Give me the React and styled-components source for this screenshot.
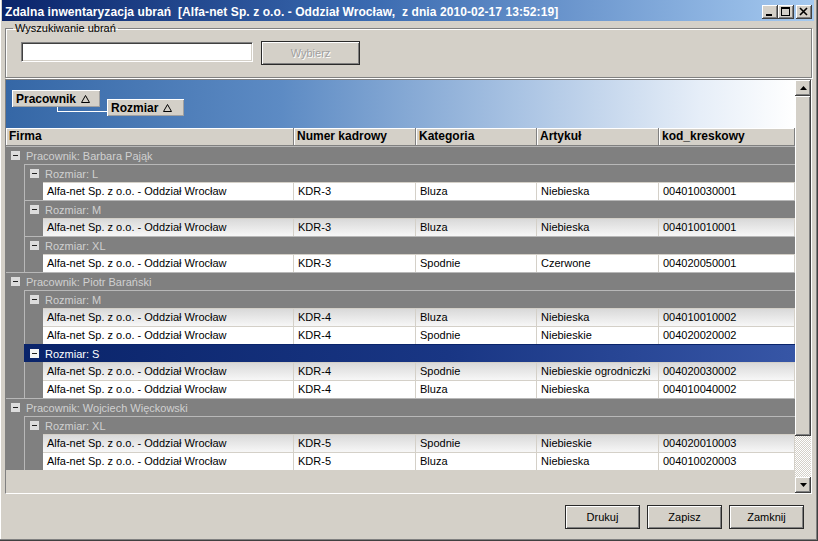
import styled, { createGlobalStyle } from "styled-components";

const GlobalStyle = createGlobalStyle`
  html, body {
    margin: 0;
    padding: 0;
    background: #d4d0c8;
  }
  body {
    font-family: "Liberation Sans", Arial, sans-serif;
    font-size: 11px;
    color: #000;
  }
  * {
    box-sizing: border-box;
  }
`;

const Window = styled.div`
  width: 818px;
  height: 541px;
  display: flex;
  flex-direction: column;
  background: #d4d0c8;
  border-right: 1px solid #404040;
  border-bottom: 1px solid #404040;
  box-shadow: inset -1px -1px 0 #808080, inset 1px 0 0 #ffffff;
  padding: 0 3px 0 2px;
`;

const TitleBar = styled.div`
  height: 21px;
  padding: 3px 2px 0 3px;
  display: flex;
  align-items: center;
  background: linear-gradient(to right, #0a246a 0%, #3a6ab0 45%, #a6caf0 100%);
`;

const TitleText = styled.div`
  flex: 1;
  color: #fff;
  font-weight: bold;
  font-size: 12px;
  letter-spacing: 0.08px;
  white-space: pre;
`;

const TitleButtons = styled.div`
  display: flex;
`;

const TitleButton = styled.div`
  width: 16px;
  height: 14px;
  margin-left: ${(p) => (p.gap ? "2px" : "0")};
  background: #d4d0c8;
  box-shadow: inset -1px -1px 0 #404040, inset 1px 1px 0 #ffffff,
    inset -2px -2px 0 #808080;
  display: flex;
  align-items: center;
  justify-content: center;
`;

const Body = styled.div`
  flex: 1;
  display: flex;
  flex-direction: column;
  padding: 0 2px 0 3px;
`;

const GroupBox = styled.fieldset`
  margin: 1px 0 0;
  padding: 7px 0 0 7px;
  height: 56px;
  border: 1px solid #808080;
  box-shadow: inset 1px 1px 0 #ffffff, 1px 1px 0 #ffffff;
  display: flex;
  align-items: flex-start;
  gap: 8px;
`;

const Legend = styled.legend`
  padding: 0 2px;
  font-size: 11px;
  line-height: 12px;
`;

const SearchInput = styled.input`
  width: 232px;
  height: 20px;
  margin: 1px 0 0 8px;
  background: #fff;
  border: 1px solid;
  border-color: #808080 #ffffff #ffffff #808080;
  box-shadow: inset 1px 1px 0 #404040, inset -1px -1px 0 #d4d0c8;
  font-family: inherit;
  font-size: 11px;
  outline: none;
`;

const Button = styled.button`
  width: ${(p) => p.width || 75}px;
  height: 24px;
  padding: 0;
  background: #d4d0c8;
  border: 1px solid #2a2a2a;
  box-shadow: inset 1px 1px 0 #ffffff, inset -1px -1px 0 #808080;
  font-family: inherit;
  font-size: 11px;
  color: ${(p) => (p.disabled ? "#a0a0a0" : "#000")};
  text-shadow: ${(p) => (p.disabled ? "1px 1px 0 #fff" : "none")};
`;

const GridFrame = styled.div`
  margin-top: 1px;
  height: 415px;
  border: 1px solid;
  border-color: #808080 #ffffff #ffffff #808080;
  display: flex;
`;

const GridMain = styled.div`
  flex: 1;
  display: flex;
  flex-direction: column;
  min-width: 0;
`;

const GroupPanel = styled.div`
  height: 48px;
  padding: 10px 0 0 6px;
  display: flex;
  align-items: flex-start;
  background: linear-gradient(
    to right,
    #3567a6 0%,
    #5d8bc4 35%,
    #a9c3e3 65%,
    #e6eef8 88%,
    #ffffff 100%
  );
`;

const Chip = styled.div`
  position: relative;
  width: ${(p) => p.width}px;
  height: 17px;
  margin-left: ${(p) => (p.nested ? "7px" : "0")};
  margin-top: ${(p) => (p.nested ? "9px" : "0")};
  padding-left: 4px;
  display: flex;
  align-items: center;
  gap: 5px;
  background: #d4d0c8;
  box-shadow: inset 1px 1px 0 #ffffff, inset -1px -1px 0 #a0a0a0;
  font-weight: bold;
  font-size: 12px;

  &::before {
    content: "";
    display: ${(p) => (p.nested ? "block" : "none")};
    position: absolute;
    left: -50px;
    top: 8px;
    width: 50px;
    height: 4px;
    border-left: 1px solid #fff;
    border-bottom: 1px solid #fff;
  }
`;

const HeaderRow = styled.div`
  height: 18px;
  display: grid;
  grid-template-columns: 288px 122px 121px 122px 1fr;
  background: #d4d0c8;
`;

const HeaderCell = styled.div`
  padding-left: 3px;
  line-height: 17px;
  font-weight: bold;
  font-size: 12px;
  border-right: 1px solid #808080;
  border-bottom: 1px solid #808080;
  box-shadow: inset 1px 1px 0 #ffffff;
  white-space: nowrap;
  overflow: hidden;
`;

const Row = styled.div`
  height: 18px;
  display: flex;
  background: #808080;
`;

const Indent = styled.div`
  width: ${(p) => (p.line ? 19 : 18)}px;
  flex: none;
  border-right: ${(p) => (p.line ? "1px solid #b8b8b8" : "none")};
`;

const GroupHead = styled.div`
  flex: 1;
  display: flex;
  align-items: center;
  gap: 6px;
  padding-left: 5px;
  border-top: 1px solid ${(p) => (p.selected ? "#0a246a" : "#b8b8b8")};
  border-left: ${(p) =>
    p.level ? `1px solid ${p.selected ? "#0a246a" : "#b8b8b8"}` : "none"};
  background: ${(p) =>
    p.selected
      ? "linear-gradient(to right, #0a246a 0%, #193684 55%, #3756a6 100%)"
      : "#808080"};
  color: ${(p) => (p.selected ? "#ffffff" : "#d0d0d0")};
  white-space: nowrap;
`;

const ExpandBox = styled.div`
  width: 9px;
  height: 9px;
  flex: none;
  background: ${(p) => (p.selected ? "#f4f4f4" : "#dcdcdc")};
  display: flex;
  align-items: center;
  justify-content: center;

  &::after {
    content: "";
    width: 5px;
    height: 1px;
    background: #202020;
  }
`;

const DataRow = styled.div`
  flex: 1;
  display: grid;
  grid-template-columns: 251px 122px 121px 122px 1fr;
  border-top: 1px solid #d4d0c8;
  background: ${(p) =>
    p.shaded ? "linear-gradient(to bottom, #d9d9d9, #f7f7f7)" : "#ffffff"};
`;

const Cell = styled.div`
  padding-left: 4px;
  line-height: 16px;
  border-right: 1px solid #d4d0c8;
  white-space: nowrap;
  overflow: hidden;
`;

const Filler = styled.div`
  flex: 1;
  background: #d4d0c8;
`;

const ScrollBar = styled.div`
  width: 16px;
  display: flex;
  flex-direction: column;
  background: #d4d0c8;
`;

const ScrollButton = styled.div`
  height: 16px;
  flex: none;
  background: #d4d0c8;
  box-shadow: inset -1px -1px 0 #404040, inset 1px 1px 0 #ffffff,
    inset -2px -2px 0 #808080;
  display: flex;
  align-items: center;
  justify-content: center;
`;

const Thumb = styled.div`
  height: 340px;
  flex: none;
  background: #d4d0c8;
  box-shadow: inset -1px -1px 0 #404040, inset 1px 1px 0 #ffffff,
    inset -2px -2px 0 #808080;
`;

const Track = styled.div`
  flex: 1;
  background: repeating-conic-gradient(#ffffff 0 25%, #d4d0c8 0 50%) 0 0 /
    2px 2px;
`;

const Footer = styled.div`
  flex: 1;
  display: flex;
  justify-content: flex-end;
  align-items: flex-start;
  gap: 7px;
  padding: 11px 8px 0 0;
`;

const SortIcon = () => (
  <svg width="9" height="8" viewBox="0 0 9 8">
    <polygon points="4.5,0.5 8.5,7.5 0.5,7.5" fill="none" stroke="#000" />
  </svg>
);

const Arrow = ({ down }) => (
  <svg width="7" height="4" viewBox="0 0 7 4">
    <polygon points={down ? "0,0 7,0 3.5,4" : "3.5,0 7,4 0,4"} fill="#000" />
  </svg>
);

const columns = ["Firma", "Numer kadrowy", "Kategoria", "Artykuł", "kod_kreskowy"];
const firm = "Alfa-net Sp. z o.o. - Oddział Wrocław";

const groups = [
  {
    name: "Barbara Pająk",
    sizes: [
      { size: "L", items: [["KDR-3", "Bluza", "Niebieska", "004010030001"]] },
      { size: "M", items: [["KDR-3", "Bluza", "Niebieska", "004010010001"]] },
      { size: "XL", items: [["KDR-3", "Spodnie", "Czerwone", "004020050001"]] },
    ],
  },
  {
    name: "Piotr Barański",
    sizes: [
      {
        size: "M",
        items: [
          ["KDR-4", "Bluza", "Niebieska", "004010010002"],
          ["KDR-4", "Spodnie", "Niebieskie", "004020020002"],
        ],
      },
      {
        size: "S",
        selected: true,
        items: [
          ["KDR-4", "Spodnie", "Niebieskie ogrodniczki", "004020030002"],
          ["KDR-4", "Bluza", "Niebieska", "004010040002"],
        ],
      },
    ],
  },
  {
    name: "Wojciech Więckowski",
    sizes: [
      {
        size: "XL",
        items: [
          ["KDR-5", "Spodnie", "Niebieskie", "004020010003"],
          ["KDR-5", "Bluza", "Niebieska", "004010020003"],
        ],
      },
    ],
  },
];

const buildRows = () => {
  const rows = [];
  let n = 0;
  groups.forEach((g) => {
    rows.push(
      <Row key={`p-${g.name}`}>
        <GroupHead>
          <ExpandBox />
          Pracownik: {g.name}
        </GroupHead>
      </Row>
    );
    g.sizes.forEach((s) => {
      rows.push(
        <Row key={`s-${g.name}-${s.size}`}>
          <Indent />
          <GroupHead level={1} selected={s.selected}>
            <ExpandBox selected={s.selected} />
            Rozmiar: {s.size}
          </GroupHead>
        </Row>
      );
      s.items.forEach((it) => {
        const shaded = n % 2 === 1;
        n += 1;
        rows.push(
          <Row key={`d-${it[3]}`}>
            <Indent line />
            <Indent />
            <DataRow shaded={shaded}>
              <Cell>{firm}</Cell>
              {it.map((v, i) => (
                <Cell key={i}>{v}</Cell>
              ))}
            </DataRow>
          </Row>
        );
      });
    });
  });
  return rows;
};

export default function App() {
  return (
    <>
      <GlobalStyle />
      <Window>
        <TitleBar>
          <TitleText>
            {"Zdalna inwentaryzacja ubrań  [Alfa-net Sp. z o.o. - Oddział Wrocław,  z dnia 2010-02-17 13:52:19]"}
          </TitleText>
          <TitleButtons>
            <TitleButton>
              <svg width="16" height="14" viewBox="0 0 16 14">
                <rect x="4" y="9" width="6" height="2" fill="#000" />
              </svg>
            </TitleButton>
            <TitleButton>
              <svg width="16" height="14" viewBox="0 0 16 14">
                <rect x="3.5" y="2.5" width="8" height="8" fill="none" stroke="#000" />
                <rect x="3" y="2" width="9" height="2" fill="#000" />
              </svg>
            </TitleButton>
            <TitleButton gap>
              <svg width="16" height="14" viewBox="0 0 16 14">
                <path d="M4 3 L11 10 M11 3 L4 10" stroke="#000" strokeWidth="1.6" />
              </svg>
            </TitleButton>
          </TitleButtons>
        </TitleBar>
        <Body>
          <GroupBox>
            <Legend>Wyszukiwanie ubrań</Legend>
            <SearchInput />
            <Button width={99} disabled>
              Wybierz
            </Button>
          </GroupBox>
          <GridFrame>
            <GridMain>
              <GroupPanel>
                <Chip width={88}>
                  Pracownik <SortIcon />
                </Chip>
                <Chip width={77} nested>
                  Rozmiar <SortIcon />
                </Chip>
              </GroupPanel>
              <HeaderRow>
                {columns.map((c) => (
                  <HeaderCell key={c}>{c}</HeaderCell>
                ))}
              </HeaderRow>
              {buildRows()}
              <Filler />
            </GridMain>
            <ScrollBar>
              <ScrollButton>
                <Arrow />
              </ScrollButton>
              <Thumb />
              <Track />
              <ScrollButton>
                <Arrow down />
              </ScrollButton>
            </ScrollBar>
          </GridFrame>
          <Footer>
            <Button>Drukuj</Button>
            <Button>Zapisz</Button>
            <Button>Zamknij</Button>
          </Footer>
        </Body>
      </Window>
    </>
  );
}
